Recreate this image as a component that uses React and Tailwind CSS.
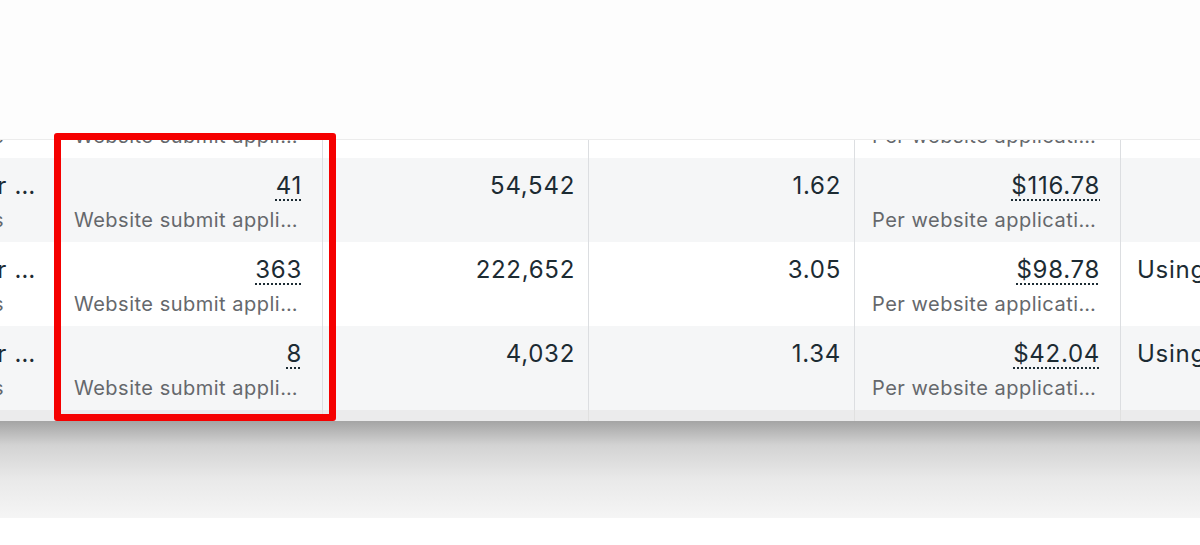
import React from 'react';

const rows = [
  { bg: 'bg-white', lead: 'Lead form for Recruiter …', leadSub: 'Results', result: '27', reach: '31,208', freq: '1.48', cost: '$88.15', extra: '' },
  { bg: 'bg-[#f5f6f7]', lead: 'Lead form for Recruiter …', leadSub: 'Results', result: '41', reach: '54,542', freq: '1.62', cost: '$116.78', extra: '' },
  { bg: 'bg-white', lead: 'Lead form for Recruiter …', leadSub: 'Results', result: '363', reach: '222,652', freq: '3.05', cost: '$98.78', extra: 'Using' },
  { bg: 'bg-[#f5f6f7]', lead: 'Lead form for Recruiter …', leadSub: 'Results', result: '8', reach: '4,032', freq: '1.34', cost: '$42.04', extra: 'Using' },
];

const MetricCell = ({ value, sub }) => (
  <div className="w-[266px] shrink-0 border-r border-[#dcdee1] pt-[14px] pl-[17px] pr-[20px]">
    <div className="text-right text-[24px] leading-[28px] h-[28px] tracking-[0.03em] text-[#1c2b33]">
      <span className="underline decoration-dotted decoration-[2px] underline-offset-[5px]">{value}</span>
    </div>
    <div className="mt-[8px] text-[20px] leading-[24px] tracking-[0.025em] text-[#65686c] whitespace-nowrap overflow-hidden">
      {sub}
    </div>
  </div>
);

const PlainCell = ({ value }) => (
  <div className="w-[266px] shrink-0 border-r border-[#dcdee1] pt-[14px] pr-[13px]">
    <div className="text-right text-[24px] leading-[28px] tracking-[0.03em] text-[#1c2b33]">{value}</div>
  </div>
);

const Row = ({ row }) => (
  <div className={`flex h-[84px] ${row.bg}`}>
    {/* Campaign name column, mostly scrolled off to the left */}
    <div className="w-[57px] shrink-0 border-r border-[#dcdee1] pt-[14px] overflow-hidden">
      <div className="flex justify-end pr-[20px] text-[24px] leading-[28px] tracking-[0.03em] text-[#1c2b33] whitespace-nowrap">
        {row.lead}
      </div>
      <div className="flex justify-end pr-[52px] mt-[8px] text-[20px] leading-[24px] tracking-[0.025em] text-[#65686c] whitespace-nowrap">
        {row.leadSub}
      </div>
    </div>
    <MetricCell value={row.result} sub="Website submit appli…" />
    <PlainCell value={row.reach} />
    <PlainCell value={row.freq} />
    <MetricCell value={row.cost} sub="Per website applicati…" />
    <div className="flex-1 pt-[14px] pl-[16px] text-[24px] leading-[28px] tracking-[0.03em] text-[#1c2b33] whitespace-nowrap">
      {row.extra}
    </div>
  </div>
);

const App = () => {
  return (
    <div className="relative w-[1200px] h-[545px] overflow-hidden bg-white font-['Inter',sans-serif]">
      <div className="h-[139px] bg-[#fdfdfd]" />

      {/* Table body */}
      <div className="h-[271px] overflow-hidden border-t border-[#ececec]">
        <div className="-mt-[66px]">
          {rows.map((row, i) => (
            <Row key={i} row={row} />
          ))}
        </div>
      </div>

      {/* Bottom bar */}
      <div className="flex h-[11px] bg-[#ebebec]">
        <div className="w-[57px] shrink-0 border-r border-[#e0e0e0]" />
        <div className="w-[266px] shrink-0 border-r border-[#e0e0e0]" />
        <div className="w-[266px] shrink-0 border-r border-[#e0e0e0]" />
        <div className="w-[266px] shrink-0 border-r border-[#e0e0e0]" />
        <div className="w-[266px] shrink-0 border-r border-[#e0e0e0]" />
      </div>

      {/* Drop shadow under the table */}
      <div className="h-[97px] bg-[linear-gradient(to_bottom,#a4a4a4_0%,#d3d3d3_25%,#e9e9e9_60%,#f5f5f5_100%)]" />

      {/* Highlight box */}
      <div className="absolute left-[54px] top-[133px] w-[282px] h-[288px] border-[7px] border-[#f50000] rounded-[3px]" />
    </div>
  );
};

export default App;
